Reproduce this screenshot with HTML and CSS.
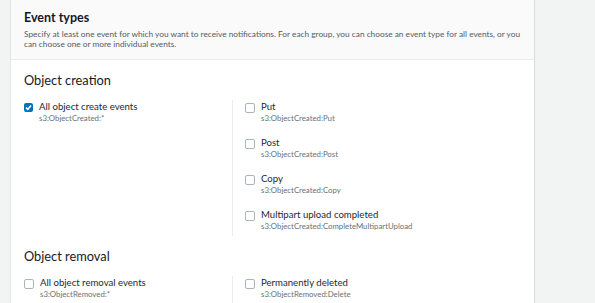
FILE: index.html
```html
<!DOCTYPE html>
<html lang="en">
<head>
    <meta charset="UTF-8">
    <meta name="viewport" content="width=device-width, initial-scale=1.0">
    <title>Event types</title>
    <link rel="stylesheet" href="styles.css">
</head>
<body>
    <div class="page">
        <div class="card">
            <div class="card-header">
                <h2>Event types</h2>
                <p>Specify at least one event for which you want to receive notifications. For each group, you can choose an event type for all events, or you can choose one or more individual events.</p>
            </div>

            <div class="group">
                <h3>Object creation</h3>
                <div class="columns">
                    <div class="col">
                        <label class="option">
                            <span class="box checked">
                                <svg width="9" height="9" viewBox="0 0 9 9"><path d="M2 4.6 L3.8 6.4 L7 2.6" fill="none" stroke="#fff" stroke-width="1.6"/></svg>
                            </span>
                            <span class="text">
                                <span class="label">All object create events</span>
                                <span class="code">s3:ObjectCreated:*</span>
                            </span>
                        </label>
                    </div>
                    <div class="col col-right">
                        <label class="option">
                            <span class="box"></span>
                            <span class="text">
                                <span class="label">Put</span>
                                <span class="code">s3:ObjectCreated:Put</span>
                            </span>
                        </label>
                        <label class="option">
                            <span class="box"></span>
                            <span class="text">
                                <span class="label">Post</span>
                                <span class="code">s3:ObjectCreated:Post</span>
                            </span>
                        </label>
                        <label class="option">
                            <span class="box"></span>
                            <span class="text">
                                <span class="label">Copy</span>
                                <span class="code">s3:ObjectCreated:Copy</span>
                            </span>
                        </label>
                        <label class="option">
                            <span class="box"></span>
                            <span class="text">
                                <span class="label">Multipart upload completed</span>
                                <span class="code">s3:ObjectCreated:CompleteMultipartUpload</span>
                            </span>
                        </label>
                    </div>
                </div>
            </div>

            <div class="group">
                <h3>Object removal</h3>
                <div class="columns">
                    <div class="col">
                        <label class="option">
                            <span class="box"></span>
                            <span class="text">
                                <span class="label">All object removal events</span>
                                <span class="code">s3:ObjectRemoved:*</span>
                            </span>
                        </label>
                    </div>
                    <div class="col col-right">
                        <label class="option">
                            <span class="box"></span>
                            <span class="text">
                                <span class="label">Permanently deleted</span>
                                <span class="code">s3:ObjectRemoved:Delete</span>
                            </span>
                        </label>
                    </div>
                </div>
            </div>
        </div>
    </div>
</body>
</html>
```

FILE: styles.css
```css
body {
    margin: 0;
    background-color: #f2f3f3;
    font-family: Lato, "Open Sans", sans-serif;
    color: #16191f;
}
.page {
    padding-left: 10px;
    width: 525px;
    height: 303px;
    overflow: hidden;
}
.card {
    background-color: #fff;
    border-left: 1px solid #e4e6e6;
    border-right: 1px solid #d5dbdb;
    height: 303px;
}
.card-header {
    background-color: #fafafa;
    border-bottom: 1px solid #eaeded;
    padding: 9px 13px 0;
    height: 50px;
}
.card-header h2 {
    margin: 0;
    font-size: 12.5px;
    font-weight: 700;
    line-height: 18px;
}
.card-header p {
    margin: 2px 0 0;
    font-size: 8.3px;
    line-height: 10px;
    color: #545b64;
}
.group {
    padding: 0 13px;
}
.group h3 {
    margin: 0;
    padding: 10px 0 10px;
    font-size: 12.8px;
    font-weight: 400;
    line-height: 20px;
}
.columns {
    display: grid;
    grid-template-columns: 208px 1fr;
}
.col-right {
    border-left: 1px solid #eaeded;
    padding-left: 12px;
    display: flex;
    flex-direction: column;
    gap: 12px;
    padding-bottom: 4px;
}
.option {
    display: flex;
    gap: 6px;
    align-items: flex-start;
}
.box {
    width: 8px;
    height: 8px;
    margin-top: 3px;
    border: 1px solid #aab7b8;
    border-radius: 2px;
    background-color: #fff;
    flex: none;
}
.box.checked {
    width: 9px;
    height: 9px;
    border: none;
    background-color: #0073bb;
}
.box svg {
    display: block;
}
.text {
    display: flex;
    flex-direction: column;
}
.label {
    font-size: 9.6px;
    line-height: 13px;
    color: #232a31;
}
.code {
    font-size: 7.8px;
    line-height: 11px;
    color: #687078;
}
```
